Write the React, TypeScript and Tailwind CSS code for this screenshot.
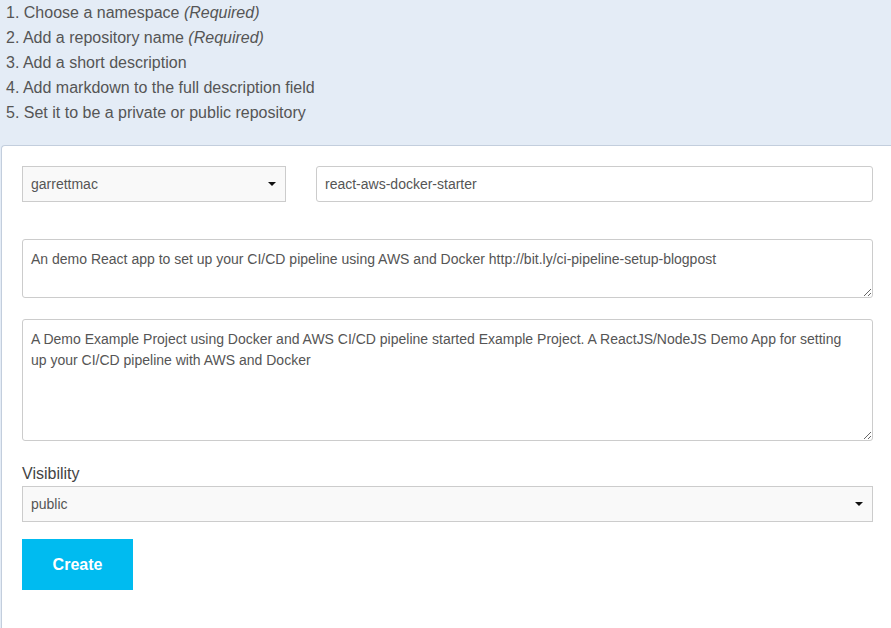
const steps = [
  { text: "1. Choose a namespace", note: "(Required)" },
  { text: "2. Add a repository name", note: "(Required)" },
  { text: "3. Add a short description" },
  { text: "4. Add markdown to the full description field" },
  { text: "5. Set it to be a private or public repository" },
];

function Caret() {
  return (
    <svg width="8" height="4" viewBox="0 0 8 4" className="shrink-0">
      <path d="M0 0h8L4 4z" fill="#111" />
    </svg>
  );
}

function FakeSelect({ value, className }: { value: string; className?: string }) {
  return (
    <div
      className={`flex h-[36px] items-center justify-between border border-[#cccccc] bg-[#f9f9f9] pl-[8px] pr-[9px] text-[14px] text-[#555555] ${className ?? ""}`}
    >
      <span>{value}</span>
      <Caret />
    </div>
  );
}

export default function App() {
  return (
    <div className="h-[628px] w-[891px] overflow-hidden bg-[#e4ecf6] font-['Liberation_Sans',Arial,sans-serif]">
      <ol className="h-[145px] pl-[6px] text-[16px] leading-[25px] text-[#555555]">
        {steps.map((s) => (
          <li key={s.text}>
            {s.text}
            {s.note && <i> {s.note}</i>}
          </li>
        ))}
      </ol>

      <form className="ml-px h-[483px] rounded-tl-[4px] border-l border-t border-[#c3cedd] bg-white pl-[20px] pr-[18px] pt-[20px]">
        <div className="flex gap-[30px]">
          <FakeSelect value="garrettmac" className="w-[264px]" />
          <input
            readOnly
            defaultValue="react-aws-docker-starter"
            className="h-[36px] flex-1 rounded-[3px] border border-[#cccccc] bg-white px-[8px] font-['Liberation_Sans',Arial,sans-serif] text-[14px] text-[#555555] outline-none"
          />
        </div>

        <textarea
          readOnly
          defaultValue="An demo React app to set up your CI/CD pipeline using AWS and Docker http://bit.ly/ci-pipeline-setup-blogpost"
          className="mt-[37px] block h-[59px] w-full rounded-[3px] border border-[#cccccc] px-[8px] pt-[9px] font-['Liberation_Sans',Arial,sans-serif] text-[14px] leading-[20px] text-[#555555] outline-none"
        />

        <textarea
          readOnly
          defaultValue="A Demo Example Project using Docker and AWS CI/CD pipeline started Example Project. A ReactJS/NodeJS Demo App for setting up your CI/CD pipeline with AWS and Docker"
          className="mt-[21px] block h-[122px] w-full rounded-[3px] border border-[#cccccc] pl-[8px] pr-[20px] pt-[9px] font-['Liberation_Sans',Arial,sans-serif] text-[14px] leading-[21px] text-[#555555] outline-none"
        />

        <label className="mt-[23px] block text-[16px] leading-[20px] text-[#444444]">Visibility</label>
        <FakeSelect value="public" className="mt-[2px] w-full" />

        <button
          type="button"
          className="mt-[17px] h-[51px] w-[111px] bg-[#00bbf0] text-[16px] font-semibold text-white"
        >
          Create
        </button>
      </form>
    </div>
  );
}
